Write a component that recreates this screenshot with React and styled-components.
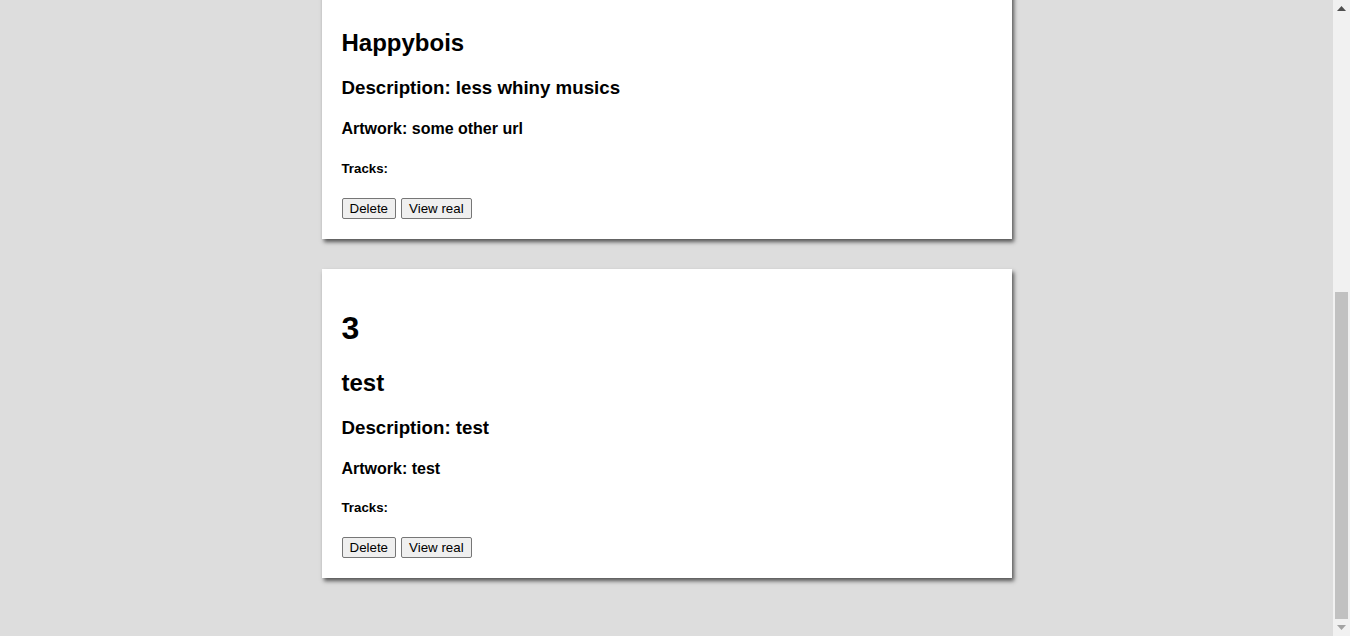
import React, { useLayoutEffect, useRef, useState } from 'react'
import styled, { createGlobalStyle } from 'styled-components'

const GlobalStyle = createGlobalStyle`
  html, body {
    margin: 0;
    height: 100%;
    overflow: hidden;
    background: #dddddd;
    font-family: "Liberation Sans", Arial, sans-serif;
  }
`

const Window = styled.div`
  display: flex;
  height: 100vh;
`

const Viewport = styled.div`
  flex: 1;
  overflow-y: scroll;
  scrollbar-width: none;
  &::-webkit-scrollbar { display: none; }
`

const Page = styled.div`
  padding: 0 0 28px;
`

const Header = styled.h1`
  margin: 0;
  padding: 40px 0 47px;
  text-align: center;
  font-size: 32px;
  color: #333;
`

const Card = styled.div`
  box-sizing: border-box;
  width: 690px;
  margin: 0 auto 30px;
  padding: 20px;
  background: #ffffff;
  box-shadow: 2px 3px 4px #555;
  color: #000;

  h1 { font-size: 32px; margin: 21.44px 0; }
  h2 { font-size: 24px; margin: 19.92px 0; }
  h3 { font-size: 18.72px; margin: 18.72px 0; }
  h4 { font-size: 16px; margin: 21.28px 0; }
  h5 { font-size: 13.28px; margin: 22.18px 0; }
`

const Actions = styled.div`
  display: flex;
  gap: 5px;
`

const Button = styled.button`
  font-family: "Liberation Sans", Arial, sans-serif;
  font-size: 13.33px;
  padding: 2px 7px;
  border: 1px solid #767676;
  border-radius: 2px;
  background: #efefef;
  color: #000;
  cursor: pointer;
  &:hover { background: #e5e5e5; }
`

const Scrollbar = styled.div`
  width: 17px;
  display: flex;
  flex-direction: column;
  background: #f1f1f1;
`

const Arrow = styled.div`
  height: 17px;
  display: flex;
  align-items: center;
  justify-content: center;
  svg { display: block; }
`

const Track = styled.div`
  flex: 1;
  position: relative;
`

const Thumb = styled.div`
  position: absolute;
  left: 2px;
  right: 2px;
  background: #c1c1c1;
`

const playlists = [
  { id: 1, name: 'Sadbois', description: 'whiny musics', artwork: 'some url' },
  { id: 2, name: 'Happybois', description: 'less whiny musics', artwork: 'some other url' },
  { id: 3, name: 'test', description: 'test', artwork: 'test' },
]

const Playlist = ({ item }) => (
  <Card>
    <h1>{item.id}</h1>
    <h2>{item.name}</h2>
    <h3>Description: {item.description}</h3>
    <h4>Artwork: {item.artwork}</h4>
    <h5>Tracks:</h5>
    <Actions>
      <Button>Delete</Button>
      <Button>View real</Button>
    </Actions>
  </Card>
)

const App = () => {
  const view = useRef(null)
  const track = useRef(null)
  const [thumb, setThumb] = useState({ top: 0, height: 0 })

  useLayoutEffect(() => {
    const el = view.current
    el.scrollTop = el.scrollHeight
    const t = track.current.clientHeight
    const ratio = el.clientHeight / el.scrollHeight
    const height = Math.round(t * ratio)
    const max = el.scrollHeight - el.clientHeight
    const top = max > 0 ? Math.round((el.scrollTop / max) * (t - height)) : 0
    setThumb({ top, height })
  }, [])

  return (
    <>
      <GlobalStyle />
      <Window>
        <Viewport ref={view}>
          <Page>
            <Header>Playlists</Header>
            {playlists.map(p => <Playlist key={p.id} item={p} />)}
          </Page>
        </Viewport>
        <Scrollbar>
          <Arrow>
            <svg width="9" height="5" viewBox="0 0 9 5"><path d="M4.5 0 L9 5 L0 5 Z" fill="#505050" /></svg>
          </Arrow>
          <Track ref={track}>
            <Thumb style={{ top: thumb.top, height: thumb.height }} />
          </Track>
          <Arrow>
            <svg width="9" height="5" viewBox="0 0 9 5"><path d="M0 0 L9 0 L4.5 5 Z" fill="#a3a3a3" /></svg>
          </Arrow>
        </Scrollbar>
      </Window>
    </>
  )
}

export default App
